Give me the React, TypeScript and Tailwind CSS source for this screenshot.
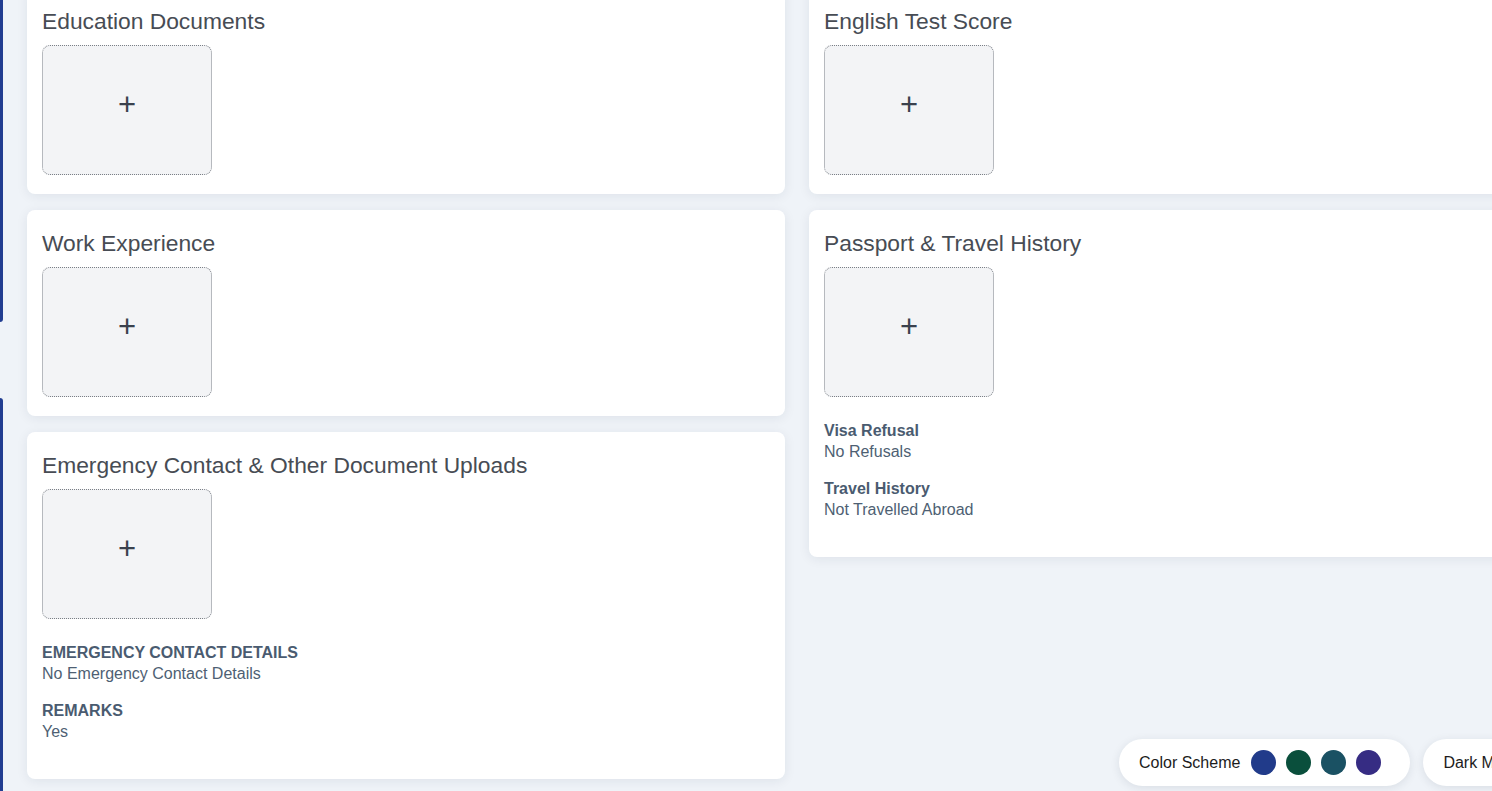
import React from 'react';

type Field = { label: string; value: string };

type Section = {
  title: string;
  fields?: Field[];
};

const leftSections: Section[] = [
  { title: 'Education Documents' },
  { title: 'Work Experience' },
  {
    title: 'Emergency Contact & Other Document Uploads',
    fields: [
      { label: 'EMERGENCY CONTACT DETAILS', value: 'No Emergency Contact Details' },
      { label: 'REMARKS', value: 'Yes' },
    ],
  },
];

const rightSections: Section[] = [
  { title: 'English Test Score' },
  {
    title: 'Passport & Travel History',
    fields: [
      { label: 'Visa Refusal', value: 'No Refusals' },
      { label: 'Travel History', value: 'Not Travelled Abroad' },
    ],
  },
];

const schemes = ['#213b8a', '#0a4f3c', '#1a5163', '#362c83'];

function UploadBox() {
  return (
    <button className="w-[170px] h-[130px] rounded-lg border border-dotted border-[#7a7f86] bg-[#f3f4f6] flex items-center justify-center pb-3 text-[31px] leading-none text-[#3a414d]">
      +
    </button>
  );
}

function DocCard({ section }: { section: Section }) {
  return (
    <div className="bg-white rounded-lg shadow-[0_2px_12px_rgba(30,41,59,0.08)] px-[15px] pt-[19px] pb-[19px]">
      <h3 className="text-[22.8px] leading-[28px] text-[#474c54] mb-[10px]">{section.title}</h3>
      <UploadBox />

      {/* Extra details under the uploads */}
      {section.fields && (
        <div className="mt-[23px] pb-[2px]">
          {section.fields.map((f) => (
            <div key={f.label} className="mb-4">
              <div className="font-bold text-base leading-[21px] text-[#4a5b70]">{f.label}</div>
              <div className="text-base leading-[21px] text-[#4e5f73]">{f.value}</div>
            </div>
          ))}
        </div>
      )}
    </div>
  );
}

export default function App() {
  return (
    <div
      className="relative h-[791px] overflow-hidden bg-[#eff3f8]"
      style={{ fontFamily: '"Liberation Sans", Arial, sans-serif' }}
    >
      {/* Sidebar edge peeking in */}
      <div className="absolute left-0 top-0 w-[3px] h-[322px] bg-[#213d91] rounded-br-[14px]" />
      <div className="absolute left-0 top-[398px] bottom-0 w-[3px] bg-[#213d91] rounded-tr-[14px]" />

      <div className="-mt-3 pl-[27px] flex gap-6 items-start w-max">
        <div className="w-[758px] flex flex-col gap-4">
          {leftSections.map((s) => (
            <DocCard key={s.title} section={s} />
          ))}
        </div>
        <div className="w-[758px] flex flex-col gap-4">
          {rightSections.map((s) => (
            <DocCard key={s.title} section={s} />
          ))}
        </div>
      </div>

      {/* Floating theme controls */}
      <div className="absolute left-[1119px] bottom-[5px] flex gap-[13px] whitespace-nowrap">
        <div className="h-[47px] rounded-full bg-white shadow-[0_2px_10px_rgba(30,41,59,0.1)] flex items-center pl-5 pr-[29px] gap-[11px]">
          <span className="text-base text-[#1c1c1c]">Color Scheme</span>
          <div className="flex gap-[10px]">
            {schemes.map((c) => (
              <span key={c} className="w-[25px] h-[25px] rounded-full" style={{ backgroundColor: c }} />
            ))}
          </div>
        </div>
        <div className="h-[47px] rounded-full bg-white shadow-[0_2px_10px_rgba(30,41,59,0.1)] flex items-center px-5 gap-3">
          <span className="text-base text-[#1c1c1c]">Dark Mode</span>
          <span className="w-10 h-5 rounded-full bg-gray-300" />
        </div>
      </div>
    </div>
  );
}
